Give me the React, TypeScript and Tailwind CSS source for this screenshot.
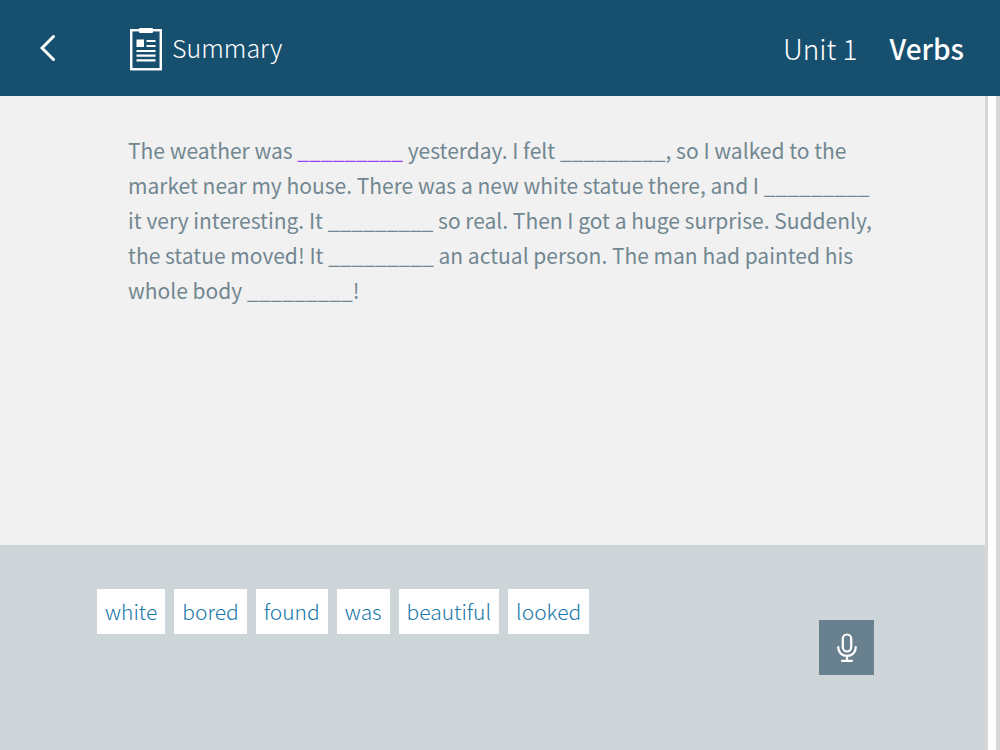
import { Fragment, useState } from 'react';
import type { ReactNode } from 'react';

const BLANK = '_________';

// text between the gaps, a gap follows every part but the last
const PARTS = [
  'The weather was ',
  ' yesterday. I felt ',
  ', so I walked to the market near my house. There was a new white statue there, and I ',
  ' it very interesting. It ',
  ' so real. Then I got a huge surprise. Suddenly, the statue moved! It ',
  ' an actual person. The man had painted his whole body ',
  '!',
];

const WORDS = ['white', 'bored', 'found', 'was', 'beautiful', 'looked'];

function BackIcon() {
  return (
    <svg width="16" height="28" viewBox="0 0 16 28" fill="none" stroke="currentColor" strokeWidth="3" aria-hidden="true">
      <path d="M13.5 2.5 L2 14 L13.5 25.5" strokeLinecap="round" />
    </svg>
  );
}

function SummaryIcon() {
  return (
    <svg width="32" height="44" viewBox="0 0 32 44" fill="none" stroke="currentColor" aria-hidden="true">
      <rect x="1.25" y="3.25" width="29.5" height="39" strokeWidth="2.4" />
      <rect x="9" y="1" width="14" height="5" rx="1" fill="currentColor" stroke="none" />
      <rect x="6.5" y="12.5" width="7.5" height="7.5" fill="currentColor" stroke="none" />
      <path d="M16.5 14H25.5M16.5 19H25.5M6.5 24H25.5M6.5 28.7H25.5M6.5 33.4H25.5" strokeWidth="2.2" />
    </svg>
  );
}

function MicIcon() {
  return (
    <svg width="20" height="30" viewBox="0 0 20 30" fill="none" stroke="currentColor" strokeWidth="2.2" strokeLinecap="round" aria-hidden="true">
      <rect x="5.8" y="1.5" width="8.4" height="17" rx="4.2" />
      <path d="M1.3 14V14.8C1.3 19.5 5 22.8 10 22.8S18.7 19.5 18.7 14.8V14" />
      <path d="M10 23V27.5M5 27.8H15" />
    </svg>
  );
}

function WordChip({ children, onClick }: { children: ReactNode; onClick: () => void }) {
  return (
    <button onClick={onClick} className="bg-white px-2 h-[45px] text-[21px] font-light text-[#1577a9]">
      {children}
    </button>
  );
}

export default function App() {
  const [answers, setAnswers] = useState<string[]>([]);
  const gapCount = PARTS.length - 1;

  const addWord = (word: string) => {
    if (answers.length < gapCount) setAnswers([...answers, word]);
  };

  return (
    <div className="min-h-screen flex flex-col font-['Noto_Sans_CJK_SC','Open_Sans',sans-serif]">
      <header className="h-24 shrink-0 bg-[#17506f] text-white font-light pl-10 pr-9 flex items-center">
        <button aria-label="Back" className="mr-[74px]">
          <BackIcon />
        </button>
        <div className="flex items-center gap-[10px] pt-[2px]">
          <SummaryIcon />
          <h1 className="text-[25px] leading-9 pb-1">Summary</h1>
        </div>
        <div className="ml-auto flex items-center gap-8 text-[28px] leading-9">
          <span>Unit 1</span>
          <span className="font-medium">Verbs</span>
        </div>
      </header>

      <div className="grow flex">
        <main className="grow flex flex-col">
          <section className="grow bg-[#f1f1f1] pl-32 pr-28 pt-[37px]">
            <p className="text-[21px] leading-[35px] text-[#718791]">
              {PARTS.map((part, i) => (
                <Fragment key={i}>
                  {part}
                  {i < gapCount && (
                    <span className={i === answers.length ? 'text-[#9a3ffb]' : ''}>{answers[i] ?? BLANK}</span>
                  )}
                </Fragment>
              ))}
            </p>
          </section>

          <section className="h-[205px] shrink-0 bg-[#cdd5d8] pl-[97px] pr-[111px] flex items-start justify-between">
            <div className="flex flex-wrap gap-[9px] pt-11">
              {WORDS.map((word) => (
                <WordChip key={word} onClick={() => addWord(word)}>
                  {word}
                </WordChip>
              ))}
            </div>
            <button
              aria-label="Record"
              className="mt-[75px] size-[55px] shrink-0 bg-[#69818e] text-white flex items-center justify-center"
            >
              <MicIcon />
            </button>
          </section>
        </main>

        {/* scroll track */}
        <div className="w-[15px] shrink-0 bg-white border-l-[3px] border-r-4 border-[#d6d6d6]" />
      </div>
    </div>
  );
}
